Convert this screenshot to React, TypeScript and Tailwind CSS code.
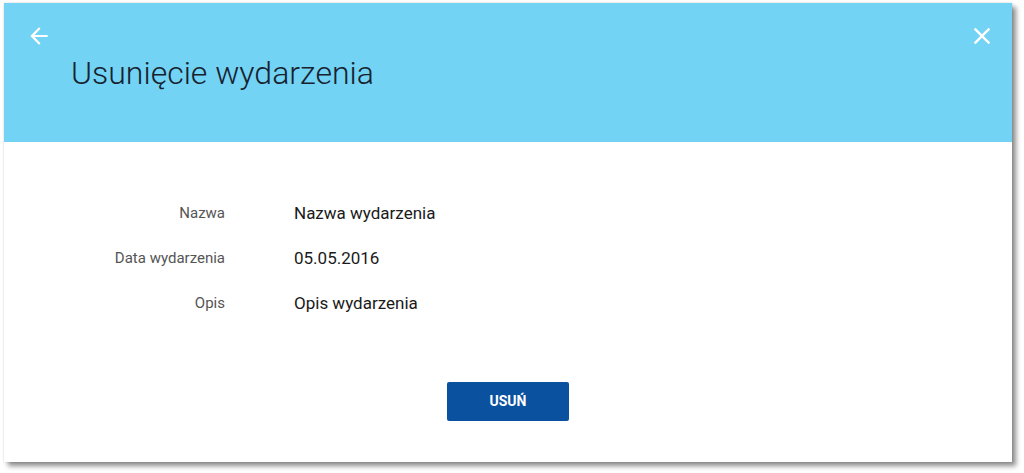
import React from 'react';

const rows = [
    { label: 'Nazwa', value: 'Nazwa wydarzenia' },
    { label: 'Data wydarzenia', value: '05.05.2016' },
    { label: 'Opis', value: 'Opis wydarzenia' },
];

const BackIcon = () => (
    <svg width="26" height="26" viewBox="0 0 24 24" fill="white">
        <path d="M20 11H7.83l5.59-5.59L12 4l-8 8 8 8 1.41-1.41L7.83 13H20v-2z" />
    </svg>
);

const CloseIcon = () => (
    <svg width="28" height="28" viewBox="0 0 24 24" fill="white">
        <path d="M19 6.41L17.59 5 12 10.59 6.41 5 5 6.41 10.59 12 5 17.59 6.41 19 12 13.41 17.59 19 19 17.59 13.41 12z" />
    </svg>
);

const App: React.FC = () => {
    return (
        <div className="w-[1024px] h-[473px] bg-white pt-[3px] pl-[4px]" style={{ fontFamily: 'Roboto, "Noto Sans", sans-serif' }}>
            <div className="w-[1008px] h-[459px] bg-white flex flex-col shadow-[4px_4px_5px_rgba(0,0,0,0.45),0_0_2px_rgba(0,0,0,0.15)]">
                <div className="h-[139px] bg-[#72d3f5] flex flex-col">
                    <div className="flex items-center justify-between h-[28px] mt-[19px] pl-[22px] pr-[16px]">
                        <button className="flex items-center" aria-label="Wstecz">
                            <BackIcon />
                        </button>
                        <button className="flex items-center" aria-label="Zamknij">
                            <CloseIcon />
                        </button>
                    </div>
                    <h1 className="mt-[4px] pl-[67px] text-[32px] leading-[38px] font-light text-[#17222e]">
                        Usunięcie wydarzenia
                    </h1>
                </div>
                <div className="flex flex-col pt-[49px]">
                    {rows.map((row) => (
                        <div key={row.label} className="flex items-center h-[45px]">
                            <div className="w-[221px] text-right text-[15px] text-[#555555]">{row.label}</div>
                            <div className="ml-[69px] text-[17px] text-[#1a1a1a]">{row.value}</div>
                        </div>
                    ))}
                </div>
                <div className="flex justify-center mt-[56px]">
                    <button className="w-[122px] h-[39px] rounded-[2px] bg-[#0a519f] text-white text-[14px] font-bold">
                        USUŃ
                    </button>
                </div>
            </div>
        </div>
    );
};

export default App;
